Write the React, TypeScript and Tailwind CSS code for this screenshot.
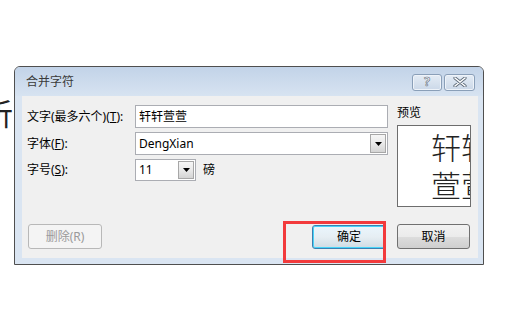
import React from "react";

const F = '[font-family:"Noto_Sans","Noto_Sans_CJK_SC",sans-serif]';

function ComboArrow({ className = "" }: { className?: string }) {
  return (
    <div
      className={`flex items-center justify-center border border-[#a7a7a7] bg-gradient-to-b from-[#f6f6f6] via-[#e9e9e9] to-[#d4d4d4] ${className}`}
    >
      <svg width="7" height="4" viewBox="0 0 7 4">
        <path d="M0 0 H7 L3.5 4 Z" fill="#000" />
      </svg>
    </div>
  );
}

function Btn({
  children,
  kind = "normal",
  className = "",
}: {
  children: React.ReactNode;
  kind?: "normal" | "default" | "disabled";
  className?: string;
}) {
  if (kind === "disabled") {
    return (
      <div
        className={`flex items-center justify-center rounded-[3px] border border-[#b8b8b8] bg-[#f4f4f4] text-[12px] text-[#9a9a9a] ${className}`}
      >
        {children}
      </div>
    );
  }
  if (kind === "default") {
    return (
      <div
        className={`flex items-center justify-center rounded-[3px] border border-[#3c7fb1] bg-gradient-to-b from-[#eaf6fd] via-[#e6eef3] to-[#cfdbe3] text-[12px] text-black shadow-[inset_0_0_0_1px_#48d4f8] ${className}`}
      >
        {children}
      </div>
    );
  }
  return (
    <div
      className={`flex items-center justify-center rounded-[3px] border border-[#707070] bg-[linear-gradient(#f2f2f2_0%,#ebebeb_50%,#dddddd_50%,#cfcfcf_100%)] text-[12px] text-black ${className}`}
    >
      {children}
    </div>
  );
}

export default function App() {
  return (
    <div className={`relative h-[329px] w-[510px] overflow-hidden bg-white ${F}`}>
      {/* document text behind the dialog */}
      <div className="absolute left-[-17px] top-[95px] text-[30px] leading-[34px] text-[#222] [font-family:'Noto_Sans_CJK_SC',sans-serif]">
        析
      </div>

      {/* dialog window */}
      <div className="relative ml-[14px] mt-[66px] flex h-[199px] w-[470px] flex-col rounded-t-[6px] border border-[#4f4f4f] bg-[#dae5f2]">
        {/* title bar */}
        <div className="flex h-[29px] items-center rounded-t-[5px] bg-gradient-to-b from-[#c2d3e8] to-[#d7e3f1] pl-[11px] pr-[8px]">
          <span className="flex-1 text-[12px] text-[#3a3a3a]">合并字符</span>
          <div className="mt-[1px] flex gap-[2px]">
            <div className="flex h-[17px] w-[30px] items-center justify-center rounded-[3px] border border-[#8a9fb8] bg-gradient-to-b from-[#e4ecf5] to-[#cbd8e8] shadow-[inset_0_0_0_1px_#eef3f9]">
              <span className="text-[12px] font-bold leading-none text-white [-webkit-text-stroke:0.6px_#5b6877]">
                ?
              </span>
            </div>
            <div className="flex h-[17px] w-[31px] items-center justify-center rounded-[3px] border border-[#8a9fb8] bg-gradient-to-b from-[#e4ecf5] to-[#cbd8e8] shadow-[inset_0_0_0_1px_#eef3f9]">
              <svg width="14" height="10" viewBox="0 0 14 10">
                <path
                  d="M2 1 L12 9 M12 1 L2 9"
                  stroke="#5b6877"
                  strokeWidth="3.2"
                  strokeLinecap="round"
                />
                <path
                  d="M2 1 L12 9 M12 1 L2 9"
                  stroke="#ffffff"
                  strokeWidth="1.6"
                  strokeLinecap="round"
                />
              </svg>
            </div>
          </div>
        </div>

        {/* client area */}
        <div className="ml-[7px] mr-[5px] flex h-[162px] flex-col bg-[#f0f0f0]">
          <div className="flex h-[128px]">
            {/* form */}
            <div className="flex w-[370px] flex-col gap-[4px] pl-[5px] pt-[9px]">
              <div className="flex h-[23px] items-center">
                <span className="w-[108px] text-[12px] text-black">
                  文字(最多六个)(<span className="underline">T</span>):
                </span>
                <div className="flex h-[23px] w-[253px] items-center border border-[#abadb3] bg-white px-[3px] text-[12px] text-black">
                  轩轩萱萱
                </div>
              </div>
              <div className="flex h-[23px] items-center">
                <span className="w-[108px] text-[12px] text-black">
                  字体(<span className="underline">F</span>):
                </span>
                <div className="flex h-[23px] w-[253px] items-center border border-[#abadb3] bg-white pl-[3px] pr-[1px] text-[12px] text-black">
                  <span className="flex-1">DengXian</span>
                  <ComboArrow className="h-[19px] w-[16px]" />
                </div>
              </div>
              <div className="flex h-[22px] items-center">
                <span className="w-[108px] text-[12px] text-black">
                  字号(<span className="underline">S</span>):
                </span>
                <div className="flex h-[22px] w-[61px] items-center border border-[#abadb3] bg-white pl-[3px] pr-[1px] text-[12px] text-black">
                  <span className="flex-1">11</span>
                  <ComboArrow className="h-[18px] w-[16px]" />
                </div>
                <span className="ml-[7px] text-[12px] text-black">磅</span>
              </div>
            </div>

            {/* preview */}
            <div className="ml-[5px] flex flex-col pt-[10px]">
              <span className="h-[19px] text-[12px] leading-[14px] text-black">预览</span>
              <div className="h-[82px] w-[74px] overflow-hidden border border-[#6d6d6d] bg-white">
                <div className="ml-[33px] mt-[1px] w-[80px] whitespace-nowrap text-[30px] font-light leading-[38px] text-[#222] [font-family:'Noto_Sans_CJK_SC',sans-serif]">
                  <div>轩轩</div>
                  <div>萱萱</div>
                </div>
              </div>
            </div>
          </div>

          {/* buttons */}
          <div className="flex h-[25px] items-center">
            <Btn kind="disabled" className="ml-[6px] h-[25px] w-[74px]">
              删除(R)
            </Btn>
            <Btn kind="default" className="ml-[210px] h-[24px] w-[74px]">
              确定
            </Btn>
            <Btn className="ml-[11px] h-[25px] w-[73px]">取消</Btn>
          </div>
        </div>
      </div>

      {/* red annotation box */}
      <div className="absolute left-[283px] top-[221px] h-[42px] w-[103px] border-[3px] border-[#f23a3c]" />
    </div>
  );
}
